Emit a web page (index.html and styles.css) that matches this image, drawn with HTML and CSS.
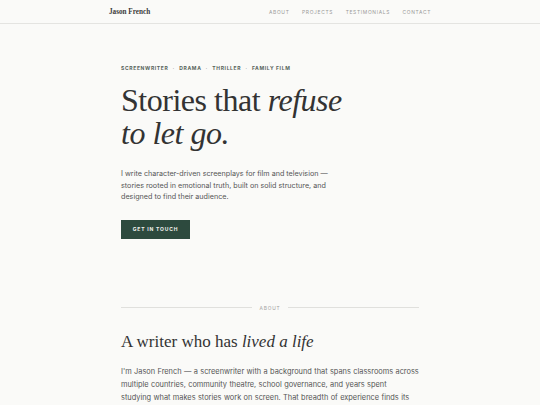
FILE: index.html
```html
<!DOCTYPE html>
<html lang="en">
<head>
<meta charset="utf-8">
<title>Jason French — Screenwriter</title>
<link rel="stylesheet" href="styles.css">
</head>
<body>
<header class="site-header">
  <div class="header-inner">
    <a class="logo" href="#">Jason French</a>
    <nav class="nav">
      <a href="#about">About</a>
      <a href="#projects">Projects</a>
      <a href="#testimonials">Testimonials</a>
      <a href="#contact">Contact</a>
    </nav>
  </div>
</header>
<main class="container">
  <section class="hero">
    <p class="eyebrow">Screenwriter <span class="dot">·</span> Drama <span class="dot">·</span> Thriller <span class="dot">·</span> Family Film</p>
    <h1 class="hero-title">Stories that <em>refuse</em><br><em>to let go.</em></h1>
    <p class="hero-lead">I write character-driven screenplays for film and television — stories rooted in emotional truth, built on solid structure, and designed to find their audience.</p>
    <a class="btn" href="#contact">Get in touch</a>
  </section>
  <section class="about" id="about">
    <div class="divider"><span>About</span></div>
    <h2 class="section-title">A writer who has <em>lived a life</em></h2>
    <p class="body-text">I'm Jason French — a screenwriter with a background that spans classrooms across multiple countries, community theatre, school governance, and years spent studying what makes stories work on screen. That breadth of experience finds its way into every page I write.</p>
  </section>
</main>
</body>
</html>
```
FILE: styles.css
```css
* { box-sizing: border-box; }
html, body { margin: 0; padding: 0; }
body {
  background: #fafaf8;
  color: #2a2a2a;
  font-family: Inter, "Liberation Sans", sans-serif;
}
a { text-decoration: none; color: inherit; }

.site-header {
  height: 24px;
  border-bottom: 1px solid #e4e4e1;
  background: #fafaf8;
}
.header-inner {
  max-width: 322px;
  height: 100%;
  margin: 0 auto;
  display: flex;
  align-items: center;
  justify-content: space-between;
}
.logo {
  font-family: "Liberation Serif", serif;
  font-size: 7.2px;
  font-weight: 700;
  color: #3a3a3a;
}
.nav {
  display: flex;
  gap: 12.5px;
}
.nav a {
  font-size: 4.9px;
  letter-spacing: 0.14em;
  text-transform: uppercase;
  color: #9a9a98;
}

.container {
  max-width: 298px;
  margin: 0 auto;
}

.hero { padding-top: 40px; }
.eyebrow {
  margin: 0;
  font-size: 5px;
  line-height: 8px;
  font-weight: 700;
  letter-spacing: 0.13em;
  text-transform: uppercase;
  color: #56635b;
}
.eyebrow .dot { padding: 0 2.5px; font-weight: 400; }
.hero-title {
  margin: 12px 0 0;
  font-family: "Liberation Serif", serif;
  font-weight: 400;
  font-size: 32px;
  line-height: 33px;
  letter-spacing: -0.015em;
  color: #333;
}
.hero-title em { font-style: italic; }
.hero-lead {
  margin: 18px 0 0;
  max-width: 218px;
  font-size: 7.2px;
  line-height: 11.6px;
  color: #555;
}
.btn {
  display: inline-block;
  margin-top: 17px;
  width: 69px;
  height: 19px;
  line-height: 19px;
  text-align: center;
  background: #2d4a3e;
  color: #f2f2ee;
  font-size: 5px;
  font-weight: 700;
  letter-spacing: 0.16em;
  text-transform: uppercase;
}

.about { padding-top: 66px; }
.divider {
  display: flex;
  align-items: center;
  gap: 7px;
  font-size: 4.8px;
  letter-spacing: 0.18em;
  text-transform: uppercase;
  color: #a0a09d;
}
.divider::before, .divider::after {
  content: "";
  flex: 1;
  height: 1px;
  background: #e0e0dd;
}
.section-title {
  margin: 20px 0 0;
  font-family: "Liberation Serif", serif;
  font-weight: 400;
  font-size: 17px;
  line-height: 22px;
  color: #333;
}
.section-title em { font-style: italic; }
.body-text {
  margin: 12px 0 0;
  font-size: 7.4px;
  line-height: 13.3px;
  word-spacing: 0.3px;
  color: #555;
}
```
